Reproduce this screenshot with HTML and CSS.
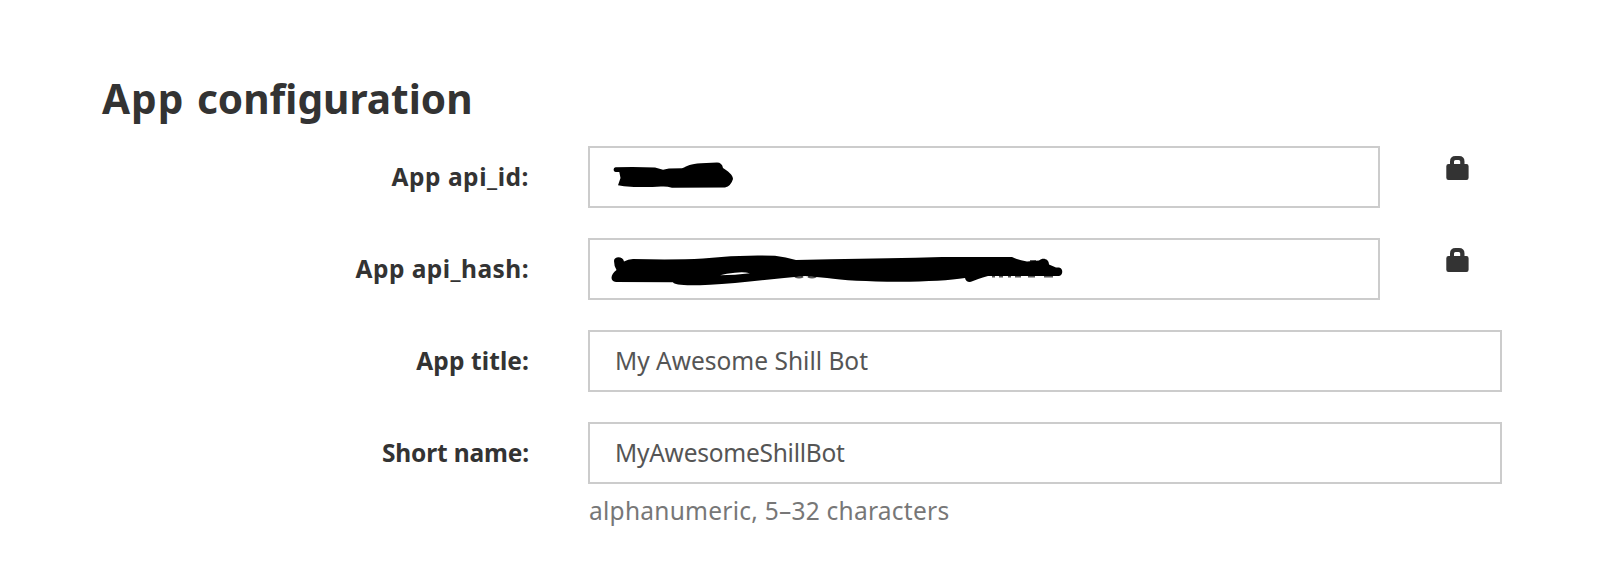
FILE: index.html
```
<!DOCTYPE html>
<html lang="en">
<head>
<meta charset="utf-8">
<title>App configuration</title>
<link rel="stylesheet" href="styles.css">
</head>
<body>
<main class="page">
  <h1 class="title"><span class="title-lead">App</span> configuration</h1>
  <form class="form">
    <div class="row">
      <span class="label label-id">App api_id:</span>
      <div class="field field-locked">
        <svg class="scribble" width="788" height="58" viewBox="590 148 788 58" role="img" aria-label="Hidden value">
          <path d="M615.5 167.3Q637 166.6 655 167.6Q660 169.2 663 169.7L669 168.5L682 168.2C688 166 690 163.7 701 163.2L717 162.5Q722 162.5 723 168C728 171 733 175 733 179Q731 186 725 187.5L672 187.7Q666 186 661 186.6Q641 187.8 624 186.2L618 185.3L620.5 178L619.3 172H615.5A2.4 2.4 0 0 1 615.5 167.3Z"/>
        </svg>
      </div>
      <svg class="lock" width="23" height="24" viewBox="0 0 23 24"><path fill-rule="evenodd" d="M4 8V5.500Q4 0 9.500 0H13Q18.500 0 18.500 5.500V8H20.500Q22.600 8 22.600 10.200V21.800Q22.600 24 20.500 24H2.500Q.3 24 .3 21.800V10.200Q.3 8 2.500 8ZM8 8H14.200V5.500Q14.200 4 12.700 4H9.500Q8 4 8 5.500Z"/></svg>
    </div>
    <div class="row">
      <span class="label label-hash">App api_hash:</span>
      <div class="field field-locked">
        <svg class="scribble" width="788" height="58" viewBox="590 240 788 58" role="img" aria-label="Hidden value">
          <path class="remnant" d="M795 276.500q4 2 8 0M808 276.500q4 2 8 0M992 276.500h3M999 276.500h4M1008 276.500h3M1015 276.500h6M1028 276.500h7M1044 276.500h9M1030 261h6"/>
          <path fill-rule="evenodd" d="M614 261C614 256 623 256 624 261.500Q628 259 633 259Q675 260 703 258.500Q740 254.500 775 255.800Q786 257 796 260L830 259.300Q890 258.500 942 257L1012 257Q1018 260 1027 261.500L1039 260.500C1043 257 1049 259 1049 264.500L1056 267.500H1059A4.400 4.400 0 0 1 1059 276L988 276Q977 279 971 281.800Q966 282.500 965 278Q943 281.500 899 281.800Q850 281.500 827 278L805 276Q773 279 735 283Q675 288 673 282.300L616 282C609 281 611 274 616.500 270Q614 266 614 261ZM720 275.200Q735 275 750 273.200Q743 271.600 735 272.800Q726 273.600 720 275.200Z"/>
        </svg>
      </div>
      <svg class="lock" width="23" height="24" viewBox="0 0 23 24"><path fill-rule="evenodd" d="M4 8V5.500Q4 0 9.500 0H13Q18.500 0 18.500 5.500V8H20.500Q22.600 8 22.600 10.200V21.800Q22.600 24 20.500 24H2.500Q.3 24 .3 21.800V10.200Q.3 8 2.500 8ZM8 8H14.200V5.500Q14.200 4 12.700 4H9.500Q8 4 8 5.500Z"/></svg>
    </div>
    <div class="row">
      <span class="label label-title">App title:</span>
      <div class="field"><span class="value">My Awesome Shill Bot</span></div>
    </div>
    <div class="row">
      <span class="label label-name">Short name:</span>
      <div class="field"><span class="value value-name">MyAwesomeShillBot</span></div>
    </div>
    <p class="hint">alphanumeric, 5–32 characters</p>
  </form>
</main>
</body>
</html>
```
FILE: styles.css
```
* { box-sizing: border-box; }
body {
  margin: 0;
  background: #fff;
  color: #333;
  font-family: "Lucida Grande", "Noto Sans", sans-serif;
}
.page { width: 1604px; height: 568px; padding: 70px 102px 0; overflow: hidden; }
.title { margin: 0; height: 76px; font-size: 40.600px; line-height: 58px; font-weight: 700; white-space: nowrap; word-spacing: 2px; }
.title-lead { letter-spacing: 1px; }
.form { display: flex; flex-direction: column; }
.row { display: flex; height: 62px; margin-bottom: 30px; }
.label { width: 427px; margin-right: 59px; text-align: right; font-size: 24.500px; line-height: 62px; font-weight: 700; white-space: nowrap; }
.label-id { letter-spacing: .55px; }
.label-hash { letter-spacing: .45px; }
.label-title { letter-spacing: .1px; }
.label-name { letter-spacing: -.15px; }
.field { width: 914px; height: 62px; border: 2px solid #ccc; padding-left: 25px; }
.field-locked { width: 792px; padding: 0; }
.scribble { display: block; }
.remnant { fill: none; stroke: #555; stroke-width: 2; }
.lock { margin: 10px 0 0 66px; fill: #333; }
.value { font-size: 24.500px; line-height: 58px; color: #555; white-space: nowrap; }
.value-name { letter-spacing: -.25px; }
.hint { margin: -30px 0 0 487px; padding-top: 8px; font-size: 24.500px; line-height: 38px; color: #777; white-space: nowrap; letter-spacing: .25px; }
```
